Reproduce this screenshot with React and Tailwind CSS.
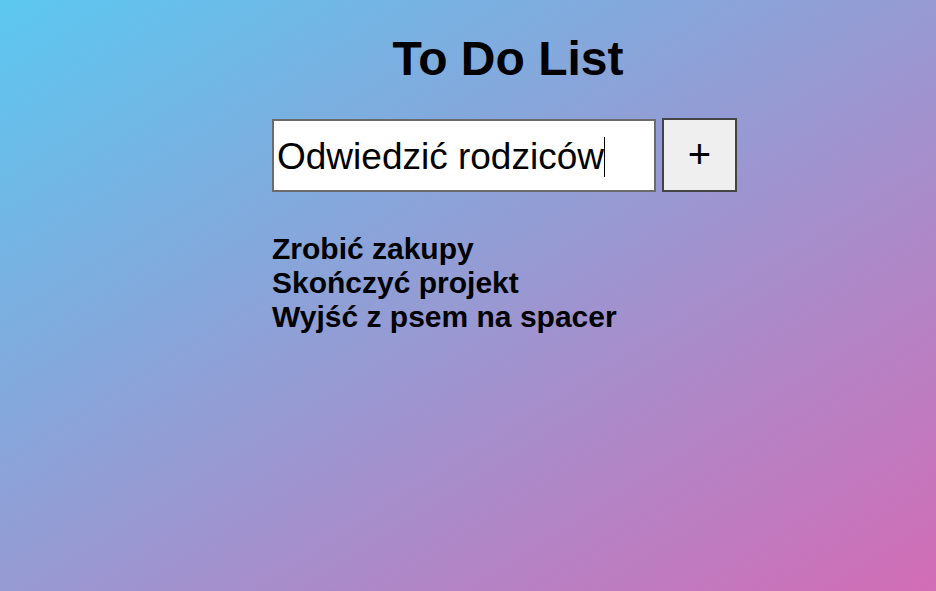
export default function App() {
  const items = ["Zrobić zakupy", "Skończyć projekt", "Wyjść z psem na spacer"];
  return (
    <div
      className="w-[936px] h-[591px] overflow-hidden bg-[linear-gradient(to_bottom_right,#5bc8f0,#d26cb6)] text-black"
      style={{ fontFamily: '"Liberation Sans", Arial, sans-serif' }}
    >
      <div className="ml-[272px] w-[472px] pt-[31px] flex flex-col">
        <h1 className="text-[48px] leading-[55px] font-bold text-center">To Do List</h1>
        <div className="mt-[33px] flex items-start gap-[6px]">
          <div className="w-[384px] h-[73px] bg-white border-2 border-[#6b6b6b] flex items-center pl-[3px] pt-[3px] text-[37px]">
            <span>Odwiedzić rodziców</span>
            <span className="w-px h-[40px] bg-black"></span>
          </div>
          <button className="w-[75px] h-[74px] -mt-px bg-[#efefef] border-2 border-[#444] text-[40px] leading-none flex items-center justify-center pb-[3px]">
            +
          </button>
        </div>
        <ul className="mt-[40px] flex flex-col font-bold text-[30px] leading-[34px]">
          {items.map((t) => (
            <li key={t}>{t}</li>
          ))}
        </ul>
      </div>
    </div>
  );
}
